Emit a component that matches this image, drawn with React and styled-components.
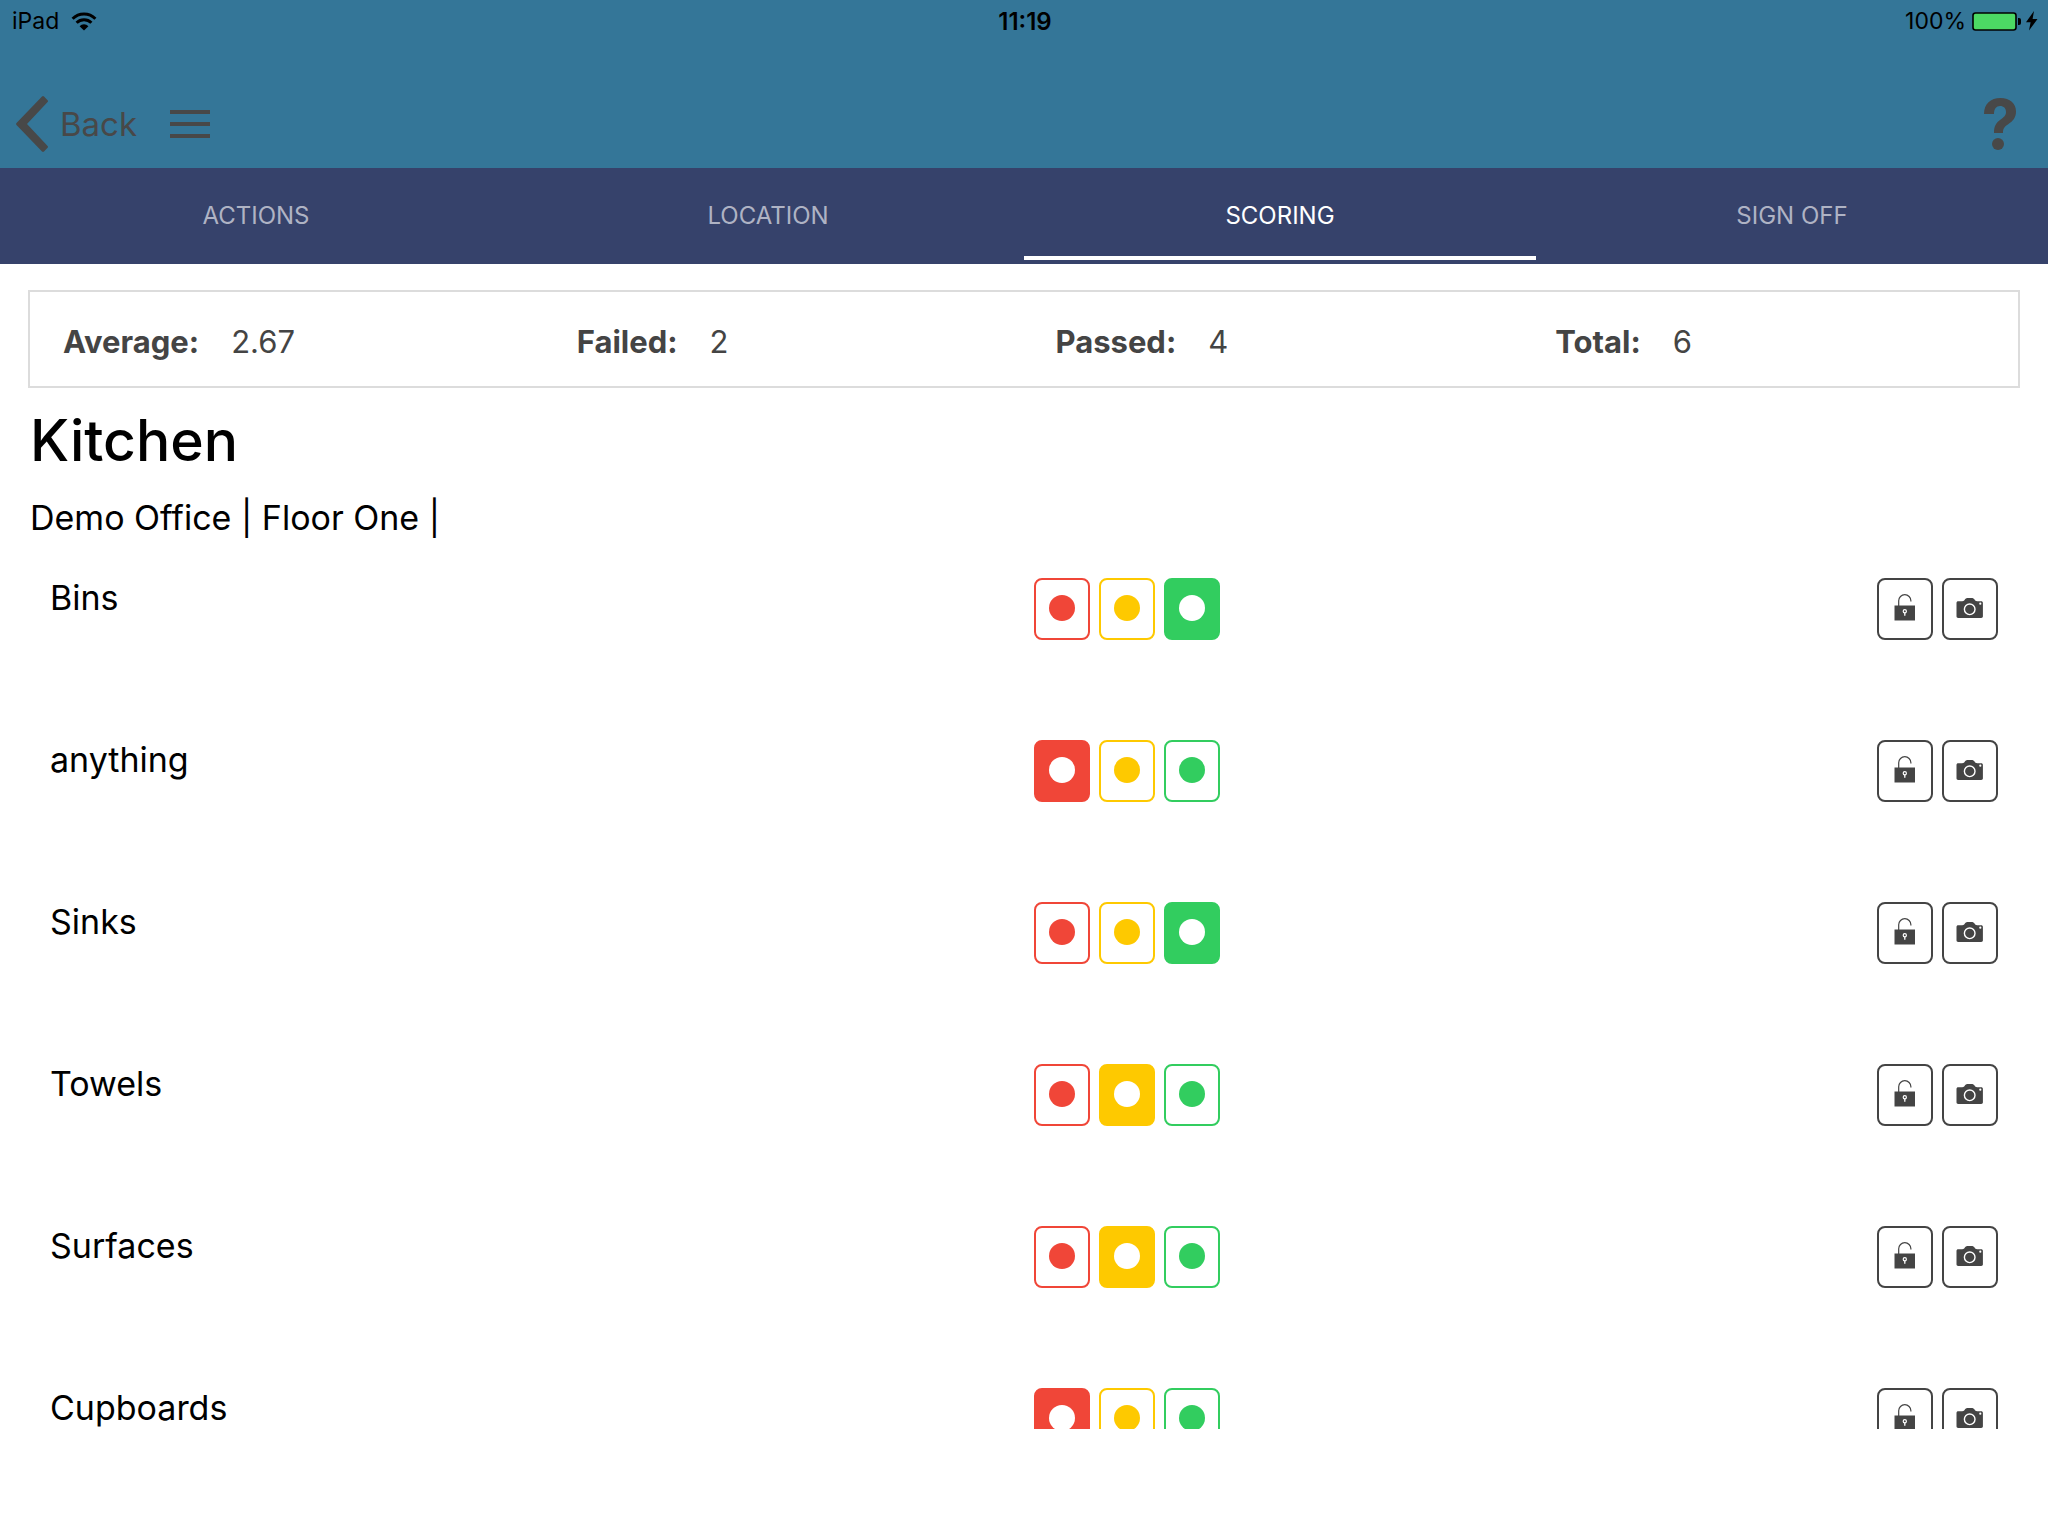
import React, { useState } from "react";
import styled, { createGlobalStyle } from "styled-components";

const tabs = ["Actions", "Location", "Scoring", "Sign off"];

const stats = [
  { label: "Average", value: "2.67" },
  { label: "Failed", value: "2" },
  { label: "Passed", value: "4" },
  { label: "Total", value: "6" },
];

const levels = [
  { name: "red", color: "#f04638" },
  { name: "amber", color: "#fec900" },
  { name: "green", color: "#32cd5f" },
];

const initialItems = [
  { name: "Bins", level: "green" },
  { name: "anything", level: "red" },
  { name: "Sinks", level: "green" },
  { name: "Towels", level: "amber" },
  { name: "Surfaces", level: "amber" },
  { name: "Cupboards", level: "red" },
];

const WifiIcon = () => (
  <svg width="26" height="19" viewBox="0 0 26 19" aria-hidden="true">
    <g fill="none" stroke="#000" strokeWidth="3">
      <path d="M1.6 6.8a16.2 16.2 0 0 1 22.8 0" />
      <path d="M5.6 10.8a10.5 10.5 0 0 1 14.8 0" />
    </g>
    <path d="M8.6 14.2a6.2 6.2 0 0 1 8.8 0L13 18.6z" />
  </svg>
);

const BatteryIcon = () => (
  <svg width="50" height="19" viewBox="0 0 50 19" aria-hidden="true">
    <rect x="1" y="1" width="43" height="17" rx="2.5" fill="#4cd964" stroke="#000" strokeWidth="1.6" />
    <path d="M46 6h1a2 2 0 0 1 2 2v3a2 2 0 0 1-2 2h-1z" />
  </svg>
);

const BoltIcon = () => (
  <svg width="12" height="20" viewBox="0 0 12 20" aria-hidden="true">
    <path d="M8 0 0 11.3h4.6L3 19.6 11.5 8H6.6z" />
  </svg>
);

const ChevronIcon = () => (
  <svg width="32" height="56" viewBox="0 0 32 56" fill="#484848" aria-hidden="true">
    <path d="M26 .5q1-.8 2 0l3.6 3.8q.8.9 0 1.8L11 28l20.6 21.9q.8.9 0 1.8L28 55.5q-1 .8-2 0L.5 29q-.8-1 0-2z" />
  </svg>
);

const MenuIcon = () => (
  <svg width="40" height="28" viewBox="0 0 40 28" fill="#484848" aria-hidden="true">
    <path d="M0 0h40v4H0zM0 12h40v4H0zM0 24h40v4H0z" />
  </svg>
);

const HelpIcon = () => (
  <svg width="32" height="52" viewBox="0 0 32 52" fill="#484848" aria-hidden="true">
    <path d="M0 16C0 6 6.5 0 16.5 0 26 0 32 5.5 32 13.5c0 6-3 9.500-7.500 12.500-4 2.700-5.500 4-5.500 9H10c0-6.500 1.500-9.500 6-13 4-3 6-4.500 6-8 0-3.700-2.300-6-6-6s-6 2.800-6 8z" />
    <circle cx="14" cy="46" r="6" />
  </svg>
);

const UnlockIcon = () => (
  <svg width="22" height="28" viewBox="0 0 22 28" aria-hidden="true">
    <path d="M4.7 12V6.8a6 6 0 0 1 12.2 0v.7" fill="none" stroke="#444" strokeWidth="1.2" />
    <path d="M.5 11.5H21V26.5H.5z" fill="#444" />
    <circle cx="10.8" cy="17.3" r="1.6" fill="none" stroke="#fff" strokeWidth="1.2" />
    <path d="M10.8 18.8v3" stroke="#fff" strokeWidth="1.3" />
  </svg>
);

const CameraIcon = () => (
  <svg width="28" height="22" viewBox="0 0 28 22" fill="#444" aria-hidden="true">
    <path d="M2.2 4.2h4c1.5 0 2-.8 2.7-1.7C9.7 1.5 10.5 1 11.7 1h4c1.2 0 2 .5 2.8 1.5.7.9 1.2 1.7 2.7 1.7h4c1 0 1.7.7 1.7 1.700v13.400c0 1-.7 1.700-1.700 1.700h-23c-1 0-1.700-.7-1.700-1.700V5.900c0-1 .7-1.700 1.700-1.700z" />
    <circle cx="13.7" cy="12.3" r="5.3" fill="none" stroke="#fff" strokeWidth="1.4" />
    <circle cx="24.3" cy="6.7" r="1.1" fill="#fff" />
  </svg>
);

const App = () => {
  const [activeTab, setActiveTab] = useState("Scoring");
  const [items, setItems] = useState(initialItems);

  const changeLevel = (name, level) => {
    setItems((prev) =>
      prev.map((item) => (item.name === name ? { ...item, level } : item))
    );
  };

  return (
    <Screen>
      <GlobalStyle />
      <Header>
        <StatusBar>
          <StatusGroup>
            iPad <WifiIcon />
          </StatusGroup>
          <Clock>11:19</Clock>
          <StatusEnd>
            100%
            <Power>
              <BatteryIcon /> <BoltIcon />
            </Power>
          </StatusEnd>
        </StatusBar>
        <Toolbar>
          <BackButton type="button">
            <ChevronIcon />
            Back
          </BackButton>
          <IconButton type="button" aria-label="Menu">
            <MenuIcon />
          </IconButton>
          <HelpButton type="button" aria-label="Help">
            <HelpIcon />
          </HelpButton>
        </Toolbar>
      </Header>

      <TabBar>
        {tabs.map((tab) => (
          <Tab
            key={tab}
            type="button"
            $active={tab === activeTab}
            onClick={() => setActiveTab(tab)}
          >
            {tab}
          </Tab>
        ))}
      </TabBar>

      <Content>
        <Summary>
          {stats.map(({ label, value }) => (
            <Stat key={label}>
              <dt>{label}:</dt>
              <dd>{value}</dd>
            </Stat>
          ))}
        </Summary>
        <Title>Kitchen</Title>
        <Place>Demo Office | Floor One |</Place>
        <List>
          {items.map((item) => (
            <Row key={item.name}>
              <ItemName>{item.name}</ItemName>
              <Controls>
                <ButtonGroup>
                  {levels.map(({ name, color }) => (
                    <LevelButton
                      key={name}
                      type="button"
                      aria-label={`${item.name} ${name}`}
                      aria-pressed={item.level === name}
                      $color={color}
                      $selected={item.level === name}
                      onClick={() => changeLevel(item.name, name)}
                    >
                      <Dot />
                    </LevelButton>
                  ))}
                </ButtonGroup>
                <ButtonGroup>
                  <ActionButton type="button" aria-label={`Unlock ${item.name}`}>
                    <UnlockIcon />
                  </ActionButton>
                  <ActionButton type="button" aria-label={`Photo of ${item.name}`}>
                    <CameraIcon />
                  </ActionButton>
                </ButtonGroup>
              </Controls>
            </Row>
          ))}
        </List>
      </Content>
      <Footer />
    </Screen>
  );
};

const GlobalStyle = createGlobalStyle`
  * {
    box-sizing: border-box;
  }

  body {
    margin: 0;
    background: #fff;
    color: #000;
    font-family: Inter, "Liberation Sans", sans-serif;
  }

  button {
    margin: 0;
    padding: 0;
    border: none;
    background: transparent;
    font-family: inherit;
    cursor: pointer;
  }

  svg {
    display: block;
    flex: none;
  }
`;

const Screen = styled.div`
  display: flex;
  flex-direction: column;
  height: 100vh;
  overflow: hidden;
`;

const Header = styled.header`
  flex: none;
  background: #347698;
`;

const StatusBar = styled.div`
  display: grid;
  grid-template-columns: 1fr auto 1fr;
  align-items: center;
  height: 42px;
  padding: 0 10px 0 12px;
  font-size: 23px;
`;

const StatusGroup = styled.div`
  display: flex;
  align-items: center;
  gap: 12px;
`;

const StatusEnd = styled(StatusGroup)`
  justify-content: flex-end;
  gap: 6px;
`;

const Power = styled(StatusGroup)`
  gap: 4px;
`;

const Clock = styled.time`
  font-size: 24px;
  font-weight: 600;
`;

const Toolbar = styled.div`
  display: flex;
  align-items: center;
  height: 126px;
  padding: 38px 32px 0 16px;
`;

const BackButton = styled.button`
  display: flex;
  align-items: center;
  gap: 12px;
  margin-right: 33px;
  color: #484848;
  font-size: 33px;
`;

const IconButton = styled.button`
  display: flex;
`;

const HelpButton = styled(IconButton)`
  margin-left: auto;
`;

const TabBar = styled.nav`
  display: flex;
  flex: none;
  height: 96px;
  padding-bottom: 4px;
  background: #36426b;
`;

const Tab = styled.button`
  flex: 1;
  padding-top: 7px;
  border-bottom: 4px solid ${({ $active }) => ($active ? "#fff" : "transparent")};
  color: ${({ $active }) => ($active ? "#fff" : "#afb3c4")};
  font-size: 24px;
  text-transform: uppercase;
`;

const Content = styled.main`
  flex: 1;
  min-height: 0;
  overflow: hidden;
`;

const Summary = styled.dl`
  display: grid;
  grid-template-columns: 514fr 479fr 500fr 463fr;
  align-items: center;
  height: 98px;
  margin: 26px 28px 18px;
  padding: 5px 0 0 33px;
  border: 2px solid #dcdcdc;
  color: #444;
  font-size: 31px;
  line-height: 40px;
`;

const Stat = styled.div`
  display: flex;
  gap: 32px;

  dt {
    font-weight: 700;
  }

  dd {
    margin: 0;
  }
`;

const Title = styled.h1`
  margin: 0 30px;
  font-size: 57px;
  font-weight: 500;
  line-height: 70px;
`;

const Place = styled.p`
  margin: 20px 30px 38px;
  font-size: 34px;
  line-height: 44px;
`;

const List = styled.ul`
  margin: 0;
  padding: 0;
  list-style: none;
`;

const Row = styled.li`
  display: grid;
  grid-template-columns: 1fr 1fr;
  height: 162px;
`;

const ItemName = styled.span`
  padding-left: 50px;
  font-size: 34px;
  line-height: 40px;
`;

const Controls = styled.div`
  display: flex;
  align-items: flex-start;
  justify-content: space-between;
  padding: 0 50px 0 10px;
`;

const ButtonGroup = styled.div`
  display: flex;
  gap: 9px;
`;

const SquareButton = styled.button`
  display: flex;
  align-items: center;
  justify-content: center;
  width: 56px;
  height: 62px;
  border-radius: 8px;
`;

const Dot = styled.span`
  width: 26px;
  height: 26px;
  border-radius: 50%;
`;

const LevelButton = styled(SquareButton)`
  && {
    padding-bottom: 2px;
    border: 2px solid ${({ $color }) => $color};
    background: ${({ $color, $selected }) => ($selected ? $color : "#fff")};
  }

  ${Dot} {
    background: ${({ $color, $selected }) => ($selected ? "#fff" : $color)};
  }
`;

const ActionButton = styled(SquareButton)`
  && {
    padding-bottom: 2px;
    border: 2px solid #444;
  }
`;

const Footer = styled.footer`
  flex: none;
  height: 107px;
  background: #fff;
`;

export default App;
